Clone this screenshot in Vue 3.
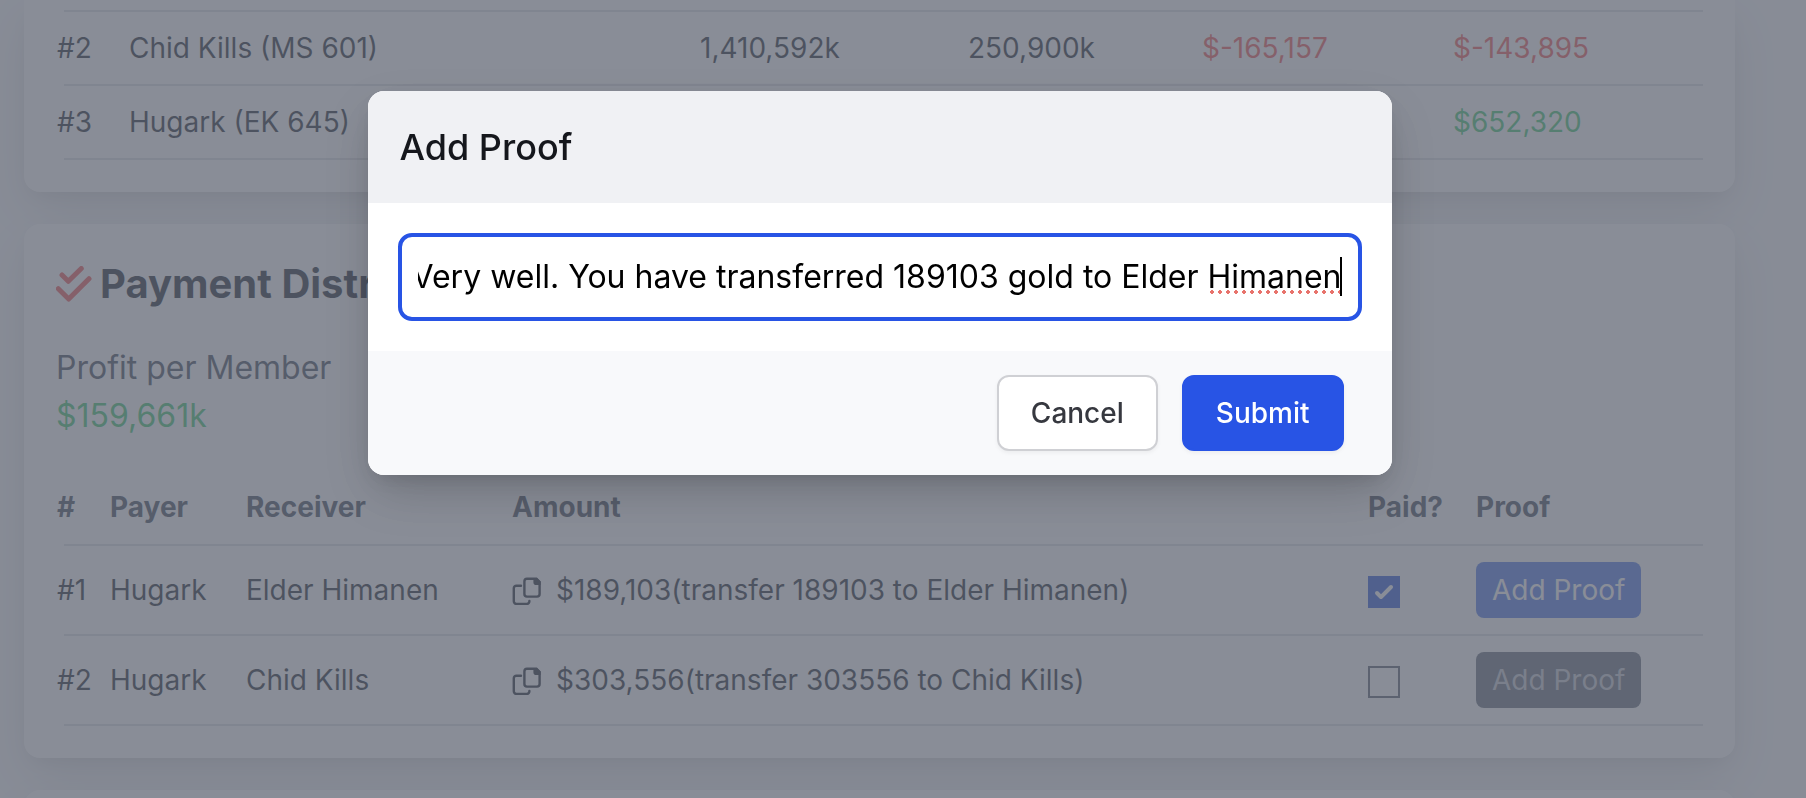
<script setup>
import { ref, onMounted } from 'vue'

const members = [
  { place: 2, name: 'Chid Kills (MS 601)', loot: '1,410,592k', supplies: '250,900k', balance: -165157, profit: -143895 },
  { place: 3, name: 'Hugark (EK 645)', loot: '', supplies: '', balance: null, profit: 652320 },
]

const payments = ref([
  { payer: 'Hugark', receiver: 'Elder Himanen', amount: 189103, paid: true },
  { payer: 'Hugark', receiver: 'Chid Kills', amount: 303556, paid: false },
])

const isModalOpen = ref(true)
const proof = ref('Very well. You have transferred 189103 gold to Elder Himanen')
const proofInput = ref(null)

const money = (value) => (value === null ? '' : `$${value.toLocaleString('en-US')}`)

const transferText = (payment) =>
  `transfer ${payment.amount} to ${payment.receiver}`

const copyTransfer = (payment) =>
  navigator.clipboard?.writeText(transferText(payment))

const closeModal = () => {
  isModalOpen.value = false
}

onMounted(() => {
  const input = proofInput.value
  input.focus()
  input.setSelectionRange(proof.value.length, proof.value.length)
  input.scrollLeft = input.scrollWidth
})
</script>

<template>
  <div class="page">
    <main class="content">
      <section class="card card-members">
        <table class="table members">
          <colgroup>
            <col class="col-place" />
            <col />
            <col class="col-loot" />
            <col class="col-supplies" />
            <col class="col-profit" />
            <col class="col-profit" />
          </colgroup>
          <tbody>
            <tr v-for="member in members" :key="member.place">
              <td>#{{ member.place }}</td>
              <td>{{ member.name }}</td>
              <td>{{ member.loot }}</td>
              <td>{{ member.supplies }}</td>
              <td :class="member.balance < 0 ? 'loss' : 'gain'">
                {{ money(member.balance) }}
              </td>
              <td :class="member.profit < 0 ? 'loss' : 'gain'">
                {{ money(member.profit) }}
              </td>
            </tr>
          </tbody>
        </table>
      </section>

      <section class="card">
        <h2 class="card-title">
          <svg class="title-icon" viewBox="0 0 36 36" aria-hidden="true">
            <path d="M6 9l6.3 6.3L25.3 2.5" />
            <path d="M2.3 22.7L12.7 33 33 12.7" />
          </svg>
          Payment Distribution
        </h2>
        <dl class="summary">
          <dt>Profit per Member</dt>
          <dd class="gain">$159,661k</dd>
        </dl>
        <table class="table payments">
          <colgroup>
            <col class="col-number" />
            <col class="col-payer" />
            <col class="col-receiver" />
            <col />
            <col class="col-paid" />
            <col class="col-proof" />
          </colgroup>
          <thead>
            <tr>
              <th>#</th>
              <th>Payer</th>
              <th>Receiver</th>
              <th>Amount</th>
              <th>Paid?</th>
              <th>Proof</th>
            </tr>
          </thead>
          <tbody>
            <tr v-for="(payment, index) in payments" :key="index">
              <td>#{{ index + 1 }}</td>
              <td>{{ payment.payer }}</td>
              <td>{{ payment.receiver }}</td>
              <td>
                <div class="amount">
                  <button
                    class="copy"
                    type="button"
                    aria-label="Copy transfer"
                    @click="copyTransfer(payment)"
                  >
                    <svg viewBox="0 0 30 30" aria-hidden="true">
                      <path
                        d="M15 3.8h9.4l3.2 3.2v12a2.6 2.6 0 0 1-2.6 2.6H15a2.6 2.6 0 0 1-2.6-2.6V6.4a2.6 2.6 0 0 1 2.6-2.6z"
                      />
                      <path
                        d="M9 10.7H4.4a2.6 2.6 0 0 0-2.6 2.6v13A2.6 2.6 0 0 0 4.4 28.900h10.4a2.6 2.6 0 0 0 2.6-2.6V26"
                      />
                      <path class="fold" d="M21.4 3h3.600l3.600 3.600v3.400h-4.400a2.800 2.800 0 0 1-2.800-2.800z" />
                    </svg>
                  </button>
                  <span>{{ money(payment.amount) }}({{ transferText(payment) }})</span>
                </div>
              </td>
              <td>
                <input
                  class="paid"
                  type="checkbox"
                  :aria-label="`Paid to ${payment.receiver}`"
                  v-model="payment.paid"
                />
              </td>
              <td>
                <button
                  class="proof-btn"
                  type="button"
                  :disabled="!payment.paid"
                  @click="isModalOpen = true"
                >
                  Add Proof
                </button>
              </td>
            </tr>
          </tbody>
        </table>
      </section>

      <section class="card"></section>
    </main>

    <div v-if="isModalOpen" class="overlay">
      <form
        class="modal"
        role="dialog"
        aria-modal="true"
        aria-labelledby="proof-title"
        @submit.prevent="closeModal"
      >
        <header class="modal-header">
          <label id="proof-title" for="proof">Add Proof</label>
        </header>
        <div class="modal-body">
          <div class="field">
            <input
              id="proof"
              ref="proofInput"
              v-model="proof"
              type="text"
              autocomplete="off"
            />
            <span class="misspelled" aria-hidden="true"></span>
            <span class="caret" aria-hidden="true"></span>
          </div>
        </div>
        <footer class="modal-footer">
          <button class="btn" type="button" @click="closeModal">Cancel</button>
          <button class="btn btn-primary" type="submit">Submit</button>
        </footer>
      </form>
    </div>
  </div>
</template>

<style>
body {
  margin: 0;
  overflow: hidden;
}
</style>

<style scoped>
.page {
  height: 100vh;
  overflow: hidden;
  background: #f9fafb;
  color: #111827;
  font-family: Inter, 'Liberation Sans', sans-serif;
  font-size: 28px;
  line-height: 40px;
}

.page * {
  box-sizing: border-box;
}

.content {
  display: flex;
  flex-direction: column;
  gap: 32px;
  padding: 0 71px 0 24px;
}

.card {
  padding: 32px;
  border-radius: 16px;
  background: white;
  box-shadow: 0 20px 50px -6px rgba(0, 0, 0, 0.14),
    0 8px 20px -8px rgba(0, 0, 0, 0.1);
}

.card-members {
  padding-top: 10px;
  border-radius: 0 0 16px 16px;
}

.table {
  width: 100%;
  table-layout: fixed;
  border-collapse: collapse;
}

.table th,
.table td {
  padding: 0 0 2px 1px;
  text-align: left;
  white-space: nowrap;
}

.table tr {
  background: linear-gradient(#dcdee2, #dcdee2) no-repeat right bottom /
    calc(100% - 8px) 2px;
}

.members {
  padding-top: 2px;
  border-collapse: separate;
  border-spacing: 0;
  background: linear-gradient(#dcdee2, #dcdee2) no-repeat right top /
    calc(100% - 8px) 2px;
}

.members td {
  height: 74px;
}

.payments th {
  height: 76px;
  color: #374151;
  font-weight: 700;
}

.payments td {
  height: 90px;
}

.payments th:nth-child(n + 4),
.payments td:nth-child(n + 4) {
  padding-left: 0;
}

.col-place {
  width: 72px;
}

.col-loot {
  width: 268px;
}

.col-supplies {
  width: 234px;
}

.col-profit {
  width: 251px;
}

.col-number {
  width: 53px;
}

.col-payer {
  width: 136px;
}

.col-receiver {
  width: 267px;
}

.col-paid {
  width: 108px;
}

.col-proof {
  width: 227px;
}

.gain {
  color: #34c168;
}

.loss {
  color: #ef4e4e;
}

.card-title {
  display: flex;
  align-items: center;
  gap: 8px;
  margin: 0 0 32px;
  font-size: 40px;
  font-weight: 700;
  line-height: 56px;
}

.title-icon {
  width: 36px;
  height: 36px;
  fill: none;
  stroke: #ef4e4e;
  stroke-width: 5;
  stroke-linecap: round;
  stroke-linejoin: round;
}

.summary {
  margin: 0 0 30px;
  font-size: 32px;
  line-height: 48px;
}

.summary dt {
  color: #374151;
}

.summary dd {
  margin: 0;
}

.amount {
  display: flex;
  align-items: center;
  gap: 14px;
}

.copy {
  display: flex;
  padding: 0;
  border: none;
  background: none;
  color: inherit;
  cursor: pointer;
}

.copy svg {
  width: 30px;
  height: 30px;
  fill: none;
  stroke: currentColor;
  stroke-width: 2.4;
  stroke-linecap: round;
}

.copy .fold {
  fill: currentColor;
  stroke: none;
}

.paid {
  display: block;
  width: 32px;
  height: 32px;
  margin: 4px 0 0;
  border: 2px solid #4b5563;
  appearance: none;
  background: white;
}

.paid:checked {
  border-color: #1d4ed8;
  background: #1d4ed8
    url("data:image/svg+xml,%3Csvg viewBox='0 0 16 16' xmlns='http://www.w3.org/2000/svg' fill='white'%3E%3Cpath d='M12.207 4.793a1 1 0 010 1.414l-5 5a1 1 0 01-1.414 0l-2-2a1 1 0 011.414-1.414L6.500 9.086l4.293-4.293a1 1 0 011.414 0z'/%3E%3C/svg%3E")
    center / 32px 32px no-repeat;
}

.proof-btn {
  display: block;
  padding: 8px 16px;
  border: none;
  border-radius: 8px;
  background: #4472e6;
  color: white;
  font: inherit;
  cursor: pointer;
}

.proof-btn:disabled {
  background: #5b6473;
  color: #c3c7cf;
  cursor: default;
}

.overlay {
  position: fixed;
  inset: 0;
  display: flex;
  align-items: flex-start;
  justify-content: center;
  padding: 91px 47px 0 0;
  background: rgba(97, 103, 116, 0.75);
}

.modal {
  width: 100%;
  max-width: 1024px;
  overflow: hidden;
  border-radius: 16px;
  background: white;
  box-shadow: 0 20px 50px -6px rgba(0, 0, 0, 0.2),
    0 8px 20px -8px rgba(0, 0, 0, 0.15);
}

.modal-header {
  padding: 32px;
  background: #f0f1f4;
  color: #15171c;
  font-size: 36px;
  font-weight: 500;
  line-height: 48px;
}

.modal-header label {
  display: block;
}

.modal-body {
  padding: 30px;
}

.field {
  position: relative;
}

.field input {
  display: block;
  width: 100%;
  height: 88px;
  padding: 0 16px 2px;
  border: 4px solid #2854e5;
  border-radius: 14px;
  outline: none;
  background: white;
  color: black;
  caret-color: transparent;
  font: inherit;
  font-size: 32px;
}

/* spelling mark and text cursor over the end of the value */
.misspelled {
  position: absolute;
  right: 22px;
  bottom: 27px;
  width: 132px;
  height: 4px;
  background: radial-gradient(circle, #e8736c 2px, transparent 2px) left center /
    8px 4px;
}

.caret {
  position: absolute;
  top: 24px;
  right: 20px;
  width: 2px;
  height: 39px;
  background: black;
}

.modal-footer {
  display: flex;
  justify-content: flex-end;
  gap: 24px;
  padding: 24px 48px;
  background: #f8f9fb;
}

.btn {
  padding: 16px 32px;
  border: 2px solid #cfd0d4;
  border-radius: 12px;
  background: white;
  box-shadow: 0 2px 4px rgba(0, 0, 0, 0.05);
  color: #36383f;
  font: inherit;
  font-weight: 500;
  cursor: pointer;
}

.btn-primary {
  border-color: #2854e5;
  background: #2854e5;
  color: white;
}
</style>
